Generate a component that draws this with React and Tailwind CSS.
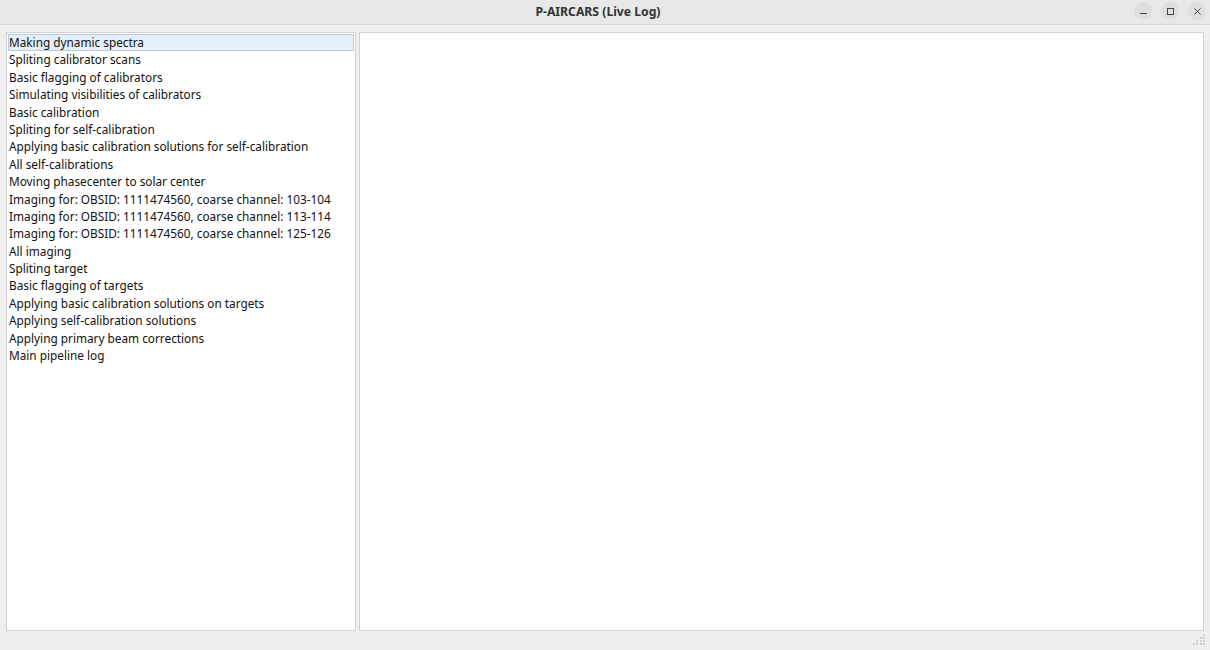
const items = [
  "Making dynamic spectra",
  "Spliting calibrator scans",
  "Basic flagging of calibrators",
  "Simulating visibilities of calibrators",
  "Basic calibration",
  "Spliting for self-calibration",
  "Applying basic calibration solutions for self-calibration",
  "All self-calibrations",
  "Moving phasecenter to solar center",
  "Imaging for: OBSID: 1111474560, coarse channel: 103-104",
  "Imaging for: OBSID: 1111474560, coarse channel: 113-114",
  "Imaging for: OBSID: 1111474560, coarse channel: 125-126",
  "All imaging",
  "Spliting target",
  "Basic flagging of targets",
  "Applying basic calibration solutions on targets",
  "Applying self-calibration solutions",
  "Applying primary beam corrections",
  "Main pipeline log",
];

const WinButton = ({ children }) => (
  <div className="w-[18px] h-[18px] rounded-full bg-[#dedede] flex items-center justify-center text-[#444444]">
    {children}
  </div>
);

export default function App() {
  return (
    <div
      className="relative w-[1210px] h-[650px] bg-[#efefef] flex flex-col overflow-hidden"
      style={{ fontFamily: '"Noto Sans", sans-serif' }}
    >
      {/* Title bar */}
      <div className="relative h-[25px] bg-[#e8e8e8] border-b border-[#d6d6d6] flex items-center justify-center pr-[14px] shrink-0">
        <span className="text-[12.2px] font-bold text-[#333333]">P-AIRCARS (Live Log)</span>
        <div className="absolute right-[4px] top-[2px] flex gap-[9px]">
          <WinButton>
            <svg width="7" height="7" viewBox="0 0 7 7">
              <path d="M0 5.5h7" stroke="currentColor" strokeWidth="1" />
            </svg>
          </WinButton>
          <WinButton>
            <svg width="7" height="7" viewBox="0 0 7 7">
              <rect x="0.5" y="0.5" width="6" height="6" fill="none" stroke="currentColor" strokeWidth="1" />
            </svg>
          </WinButton>
          <WinButton>
            <svg width="7" height="7" viewBox="0 0 7 7">
              <path d="M0.5 0.5l6 6M6.5 0.5l-6 6" stroke="currentColor" strokeWidth="1" />
            </svg>
          </WinButton>
        </div>
      </div>

      {/* Body */}
      <div className="flex-1 flex gap-[3px] px-[6px] pt-[7px] pb-[19px]">
        <div className="w-[350px] bg-white border border-[#d2d2d2] p-[1px] text-[11.8px] text-[#111111] leading-[17.4px]">
          {items.map((item, i) => (
            <div
              key={item}
              className={
                i === 0
                  ? "h-[17.4px] px-[0px] bg-[#e4eff9] border border-[#b9cde0] leading-[15.4px]"
                  : "h-[17.4px] px-[1px]"
              }
            >
              {item}
            </div>
          ))}
        </div>
        <div className="flex-1 bg-white border border-[#d2d2d2]" />
      </div>

      {/* Resize grip */}
      <div className="absolute left-[1193px] top-[634px] grid grid-cols-4 gap-[1px] w-[12px]">
        {[0, 0, 0, 1, 0, 0, 1, 1, 0, 1, 1, 1, 1, 1, 1, 1].map((d, i) => (
          <div key={i} className={d ? "w-[2px] h-[2px] bg-[#cfcfcf]" : "w-[2px] h-[2px]"} />
        ))}
      </div>
    </div>
  );
}
